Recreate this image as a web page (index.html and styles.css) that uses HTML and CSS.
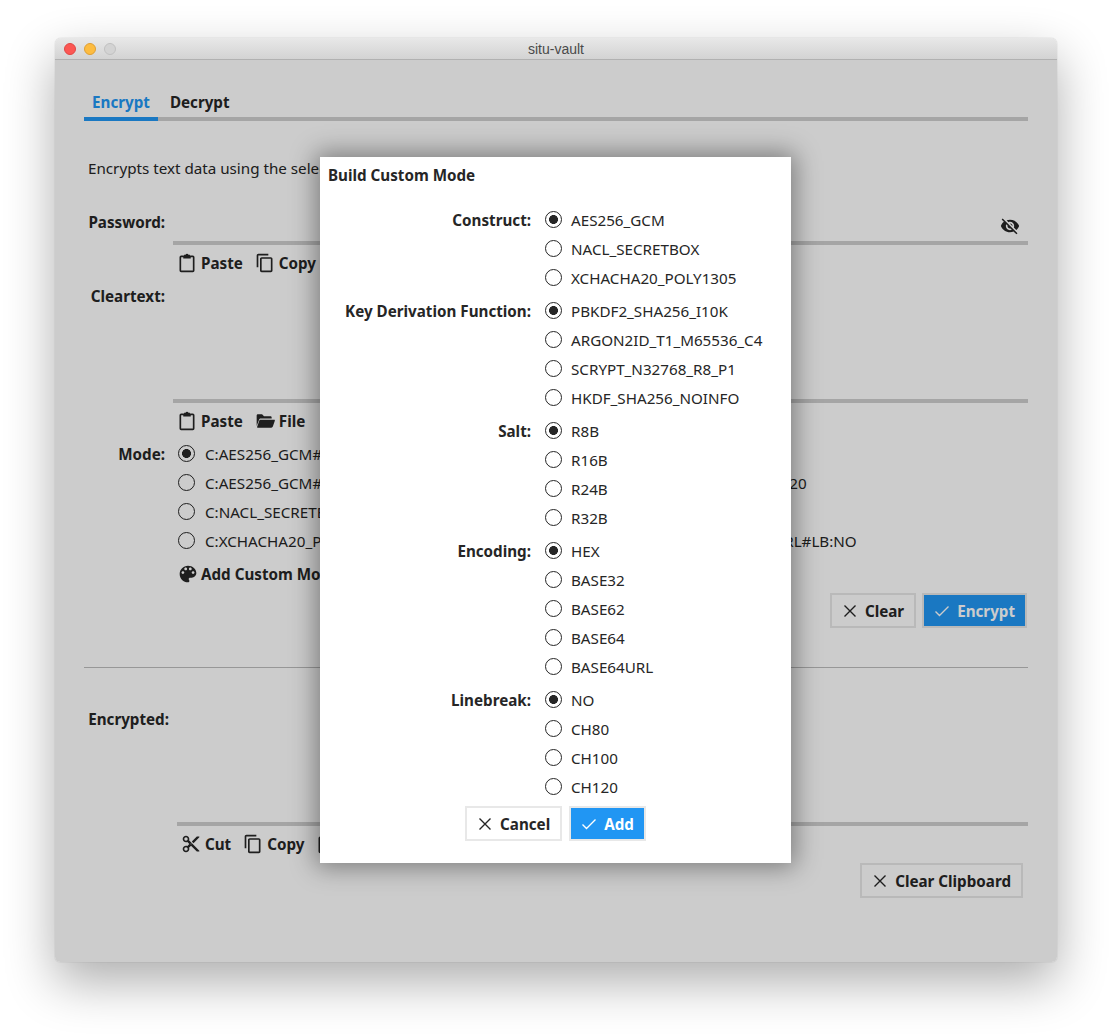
FILE: index.html
```html
<!DOCTYPE html>
<html lang="en">
<head>
    <meta charset="UTF-8">
    <meta name="viewport" content="width=device-width, initial-scale=1.0">
    <title>situ-vault</title>
    <link rel="stylesheet" href="styles.css">
</head>
<body>
    <svg class="icon-defs" aria-hidden="true">
        <symbol id="i-paste" viewBox="0 0 24 24"><path fill-rule="evenodd" d="M5 3h3.500V2h1.700a2 2 0 0 1 3.600 0h1.700v1H19a2 2 0 0 1 2 2v16a2 2 0 0 1-2 2H5a2 2 0 0 1-2-2V5a2 2 0 0 1 2-2zm0 2v16h14V5h-2.500v1.500h-9V5z"/></symbol>
        <symbol id="i-copy" viewBox="0 0 24 24"><path d="M16 1H4c-1.100 0-2 .9-2 2v14h2V3h12V1zm3 4H8c-1.100 0-2 .9-2 2v14c0 1.100.9 2 2 2h11c1.100 0 2-.9 2-2V7c0-1.100-.9-2-2-2zm0 16H8V7h11v14z"/></symbol>
        <symbol id="i-cut" viewBox="0 0 24 24"><path d="M9.640 7.640c.23-.5.36-1.050.36-1.640 0-2.210-1.790-4-4-4S2 3.790 2 6s1.790 4 4 4c.59 0 1.140-.13 1.640-.36L10 12l-2.360 2.360C7.140 14.130 6.590 14 6 14c-2.210 0-4 1.790-4 4s1.790 4 4 4 4-1.790 4-4c0-.59-.13-1.140-.36-1.640L12 14l7 7h3v-1L9.640 7.640zM6 8c-1.100 0-2-.89-2-2s.9-2 2-2 2 .89 2 2-.9 2-2 2zm0 12c-1.100 0-2-.89-2-2s.9-2 2-2 2 .89 2 2-.9 2-2 2zm6-7.500c-.28 0-.5-.22-.5-.5s.22-.5.5-.5.5.22.5.5-.22.5-.5.5zM19 3l-6 6 2 2 7-7V3z"/></symbol>
        <symbol id="i-folder" viewBox="0 0 24 24"><path d="M2 5.500C2 4.700 2.700 4 3.500 4h5l2.300 2.300h7.700c.8 0 1.500.7 1.500 1.500v1.200H7c-1 0-1.800.6-2.100 1.500L2 18z"/><path d="M6.800 10.500H23c.7 0 1 .6.800 1.200l-2.400 7c-.3.800-1 1.300-1.800 1.300H3.400c-.7 0-1-.6-.8-1.200l2.500-7.100c.2-.7.900-1.200 1.700-1.200z"/></symbol>
        <symbol id="i-palette" viewBox="0 0 24 24"><path d="M12 2C6.480 2 2 6.480 2 12s4.480 10 10 10c.92 0 1.670-.75 1.670-1.670 0-.43-.17-.82-.43-1.120-.26-.29-.42-.68-.42-1.100 0-.92.75-1.670 1.670-1.670h1.960c3.060 0 5.550-2.490 5.550-5.550C22 5.980 17.520 2 12 2zM5.890 12c-.92 0-1.670-.75-1.670-1.670s.75-1.670 1.670-1.670 1.670.75 1.670 1.670S6.810 12 5.890 12zm3.330-4.440c-.92 0-1.670-.75-1.670-1.670s.75-1.670 1.670-1.670 1.670.75 1.670 1.670-.75 1.670-1.670 1.670zm5.560 0c-.92 0-1.670-.75-1.670-1.670s.75-1.670 1.670-1.670 1.670.75 1.670 1.670-.75 1.670-1.670 1.670zM18.110 12c-.92 0-1.670-.75-1.670-1.670s.75-1.670 1.670-1.670 1.670.75 1.670 1.670-.75 1.670-1.670 1.670z"/></symbol>
        <symbol id="i-eye-off" viewBox="0 0 24 24"><path d="M12 7c2.760 0 5 2.240 5 5 0 .65-.13 1.260-.36 1.830l2.920 2.920c1.510-1.260 2.700-2.890 3.430-4.750-1.730-4.390-6-7.500-11-7.500-1.400 0-2.740.25-3.980.7l2.160 2.160C10.740 7.130 11.350 7 12 7zM2 4.270l2.280 2.280.46.46C3.080 8.300 1.780 10.020 1 12c1.730 4.390 6 7.500 11 7.500 1.550 0 3.030-.3 4.380-.84l.42.42L19.730 22 21 20.730 3.270 3 2 4.270zM7.530 9.800l1.550 1.550c-.05.21-.08.43-.08.65 0 1.660 1.340 3 3 3 .22 0 .44-.03.65-.08l1.550 1.550c-.67.33-1.410.53-2.200.53-2.760 0-5-2.240-5-5 0-.79.2-1.530.53-2.200zm4.310-.78l3.150 3.150.02-.16c0-1.660-1.340-3-3-3l-.17.01z"/></symbol>
        <symbol id="i-close" viewBox="0 0 16 16"><path d="M2.500 2.500l11 11M13.500 2.500l-11 11" fill="none" stroke="currentColor" stroke-width="1.400"/></symbol>
        <symbol id="i-check" viewBox="0 0 16 16"><path d="M1.500 8.500l4 4 9-9" fill="none" stroke="currentColor" stroke-width="1.400"/></symbol>
    </svg>

    <div class="window">
        <div class="titlebar">
            <span class="light light-red"></span>
            <span class="light light-yellow"></span>
            <span class="light light-grey"></span>
            <span class="title">situ-vault</span>
        </div>

        <div class="content">
            <div class="tabs">
                <span class="tab tab-active">Encrypt</span>
                <span class="tab">Decrypt</span>
            </div>

            <p class="intro">Encrypts text data using the selected mode and the given password.</p>

            <div class="form">
                <label class="field-label label-password">Password:</label>
                <div class="password-field">
                    <svg class="icon eye"><use href="#i-eye-off"/></svg>
                </div>

                <label class="field-label label-clear">Cleartext:</label>
                <div class="text-field">
                    <div class="toolbar">
                        <span class="tool"><svg class="icon"><use href="#i-paste"/></svg>Paste</span>
                        <span class="tool"><svg class="icon"><use href="#i-copy"/></svg>Copy</span>
                    </div>
                    <div class="text-box box-clear"></div>
                    <div class="toolbar">
                        <span class="tool"><svg class="icon"><use href="#i-paste"/></svg>Paste</span>
                        <span class="tool"><svg class="icon icon-file"><use href="#i-folder"/></svg>File</span>
                    </div>
                </div>

                <label class="field-label label-mode">Mode:</label>
                <div class="mode-list">
                    <label class="option"><input type="radio" name="mode" checked>C:AES256_GCM#KDF:PBKDF2_SHA256_I10K#SALT:R8B#ENC:HEX#LB:NO</label>
                    <label class="option"><input type="radio" name="mode">C:AES256_GCM#KDF:ARGON2ID_T1_M65536_C4#SALT:R32B#ENC:BASE64#LB:CH120</label>
                    <label class="option"><input type="radio" name="mode">C:NACL_SECRETBOX#KDF:PBKDF2_SHA256_I10K#SALT:R8B#ENC:BASE32#LB:NO</label>
                    <label class="option"><input type="radio" name="mode">C:XCHACHA20_POLY1305#KDF:SCRYPT_N32768_R8_P1#SALT:R32B#ENC:BASE64URL#LB:NO</label>
                    <span class="tool tool-custom"><svg class="icon"><use href="#i-palette"/></svg>Add Custom Mode</span>
                </div>
            </div>

            <div class="actions">
                <button class="btn"><svg class="btn-icon"><use href="#i-close"/></svg>Clear</button>
                <button class="btn btn-primary"><svg class="btn-icon"><use href="#i-check"/></svg>Encrypt</button>
            </div>

            <hr class="divider">

            <div class="result">
                <label class="field-label label-encrypted">Encrypted:</label>
                <div class="text-field">
                    <div class="text-box box-result"></div>
                    <div class="toolbar">
                        <span class="tool"><svg class="icon"><use href="#i-cut"/></svg>Cut</span>
                        <span class="tool"><svg class="icon"><use href="#i-copy"/></svg>Copy</span>
                        <span class="tool"><svg class="icon"><use href="#i-paste"/></svg>Paste</span>
                    </div>
                </div>
            </div>

            <div class="clipboard-row">
                <button class="btn"><svg class="btn-icon"><use href="#i-close"/></svg>Clear Clipboard</button>
            </div>

            <div class="overlay">
                <div class="dialog">
                    <h2 class="dialog-title">Build Custom Mode</h2>

                    <div class="dialog-form">
                        <span class="group-label">Construct:</span>
                        <div class="group">
                            <label class="option"><input type="radio" name="construct" checked>AES256_GCM</label>
                            <label class="option"><input type="radio" name="construct">NACL_SECRETBOX</label>
                            <label class="option"><input type="radio" name="construct">XCHACHA20_POLY1305</label>
                        </div>

                        <span class="group-label">Key Derivation Function:</span>
                        <div class="group">
                            <label class="option"><input type="radio" name="kdf" checked>PBKDF2_SHA256_I10K</label>
                            <label class="option"><input type="radio" name="kdf">ARGON2ID_T1_M65536_C4</label>
                            <label class="option"><input type="radio" name="kdf">SCRYPT_N32768_R8_P1</label>
                            <label class="option"><input type="radio" name="kdf">HKDF_SHA256_NOINFO</label>
                        </div>

                        <span class="group-label">Salt:</span>
                        <div class="group">
                            <label class="option"><input type="radio" name="salt" checked>R8B</label>
                            <label class="option"><input type="radio" name="salt">R16B</label>
                            <label class="option"><input type="radio" name="salt">R24B</label>
                            <label class="option"><input type="radio" name="salt">R32B</label>
                        </div>

                        <span class="group-label">Encoding:</span>
                        <div class="group">
                            <label class="option"><input type="radio" name="encoding" checked>HEX</label>
                            <label class="option"><input type="radio" name="encoding">BASE32</label>
                            <label class="option"><input type="radio" name="encoding">BASE62</label>
                            <label class="option"><input type="radio" name="encoding">BASE64</label>
                            <label class="option"><input type="radio" name="encoding">BASE64URL</label>
                        </div>

                        <span class="group-label">Linebreak:</span>
                        <div class="group">
                            <label class="option"><input type="radio" name="linebreak" checked>NO</label>
                            <label class="option"><input type="radio" name="linebreak">CH80</label>
                            <label class="option"><input type="radio" name="linebreak">CH100</label>
                            <label class="option"><input type="radio" name="linebreak">CH120</label>
                        </div>
                    </div>

                    <div class="dialog-actions">
                        <button class="btn"><svg class="btn-icon"><use href="#i-close"/></svg>Cancel</button>
                        <button class="btn btn-primary"><svg class="btn-icon"><use href="#i-check"/></svg>Add</button>
                    </div>
                </div>
            </div>
        </div>
    </div>
</body>
</html>
```

FILE: styles.css
```css
* {
    box-sizing: border-box;
}
html, body {
    height: 100%;
}
body {
    margin: 0;
    padding: 38px 55px 73px;
    background: #fff;
    font-family: "Noto Sans", sans-serif;
    font-size: 15.2px;
    color: #262626;
}
.icon-defs {
    display: none;
}
.window {
    width: 1002px;
    height: 924px;
    display: flex;
    flex-direction: column;
    border-radius: 6px 6px 5px 5px;
    overflow: hidden;
    box-shadow: 0 20px 50px rgba(0, 0, 0, 0.32), 0 0 1px rgba(0, 0, 0, 0.35);
}
.titlebar {
    flex: none;
    height: 22px;
    display: flex;
    align-items: center;
    position: relative;
    padding-left: 9px;
    gap: 8px;
    background: linear-gradient(to bottom, #e8e8e8, #d3d3d3);
    border-bottom: 1px solid #b1b1b1;
}
.light {
    width: 12px;
    height: 12px;
    border-radius: 50%;
}
.light-red {
    background: #fc5753;
    border: 1px solid #df4744;
}
.light-yellow {
    background: #fdbc40;
    border: 1px solid #de9f34;
}
.light-grey {
    background: #d3d3d3;
    border: 1px solid #c0c0c0;
}
.title {
    position: absolute;
    left: 0;
    right: 0;
    padding-top: 1px;
    text-align: center;
    font-family: "Liberation Sans", sans-serif;
    font-size: 14px;
    color: #4a4a4a;
}
.content {
    flex: 1;
    position: relative;
    background: #fff;
    padding: 32px 29px 0;
}

/* tabs */
.tabs {
    display: flex;
    gap: 4px;
    height: 29px;
    border-bottom: 4px solid #cfcfcf;
}
.tab {
    height: 29px;
    padding: 0 8px;
    line-height: 21px;
    font-weight: 700;
}
.tab-active {
    color: #2196f3;
    border-bottom: 4px solid #2196f3;
}
.intro {
    margin: 37px 0 0 4px;
    line-height: 20px;
}

/* main form */
.form {
    display: grid;
    grid-template-columns: 89px 1fr;
    margin-top: 28px;
}
.field-label {
    font-weight: 700;
    line-height: 20px;
    text-align: right;
    padding-right: 8px;
}
.label-password {
    padding-top: 6px;
}
.label-clear {
    padding-top: 41px;
}
.label-mode {
    padding-top: 5px;
}
.password-field {
    height: 39px;
    border-bottom: 4px solid #cfcfcf;
    display: flex;
    justify-content: flex-end;
    align-items: center;
    padding: 4px 8px 0 0;
}
.eye {
    width: 20px;
    height: 20px;
}
.text-field {
    display: flex;
    flex-direction: column;
}
.toolbar {
    display: flex;
    gap: 12px;
    height: 36px;
    padding: 5px 0 0 4px;
}
.tool {
    display: inline-flex;
    align-items: center;
    gap: 4px;
    height: 26px;
    font-weight: 700;
}
.icon {
    width: 20px;
    height: 20px;
    fill: currentColor;
}
.box-clear {
    height: 124px;
    margin-top: -2px;
    border-bottom: 4px solid #cfcfcf;
}
.mode-list {
    display: flex;
    flex-direction: column;
    margin-left: 5px;
}
.option {
    display: flex;
    align-items: center;
    height: 29px;
    white-space: nowrap;
}
.option input {
    appearance: none;
    margin: 0 9px 0 0;
    width: 17px;
    height: 17px;
    flex: none;
    border: 1.8px solid #262626;
    border-radius: 50%;
}
.option input:checked {
    background: radial-gradient(circle, #262626 0, #262626 4.2px, transparent 4.7px);
}
.mode-list .option input {
    margin-right: 10px;
}
.tool-custom {
    margin-top: 6px;
    gap: 3px;
}

/* buttons */
.actions {
    display: flex;
    justify-content: flex-end;
    gap: 6px;
    margin-top: 6px;
    padding-right: 1px;
}
.btn {
    display: inline-flex;
    align-items: center;
    gap: 7px;
    height: 35px;
    padding: 0 10px;
    background: #fff;
    border: 2px solid #e8e8e8;
    font-family: inherit;
    font-size: 15.2px;
    font-weight: 700;
    color: #262626;
}
.btn-primary {
    background: #2196f3;
    color: #fff;
}
.btn-icon {
    width: 16px;
    height: 16px;
}
.divider {
    margin: 39px 0 0;
    border: 0;
    border-top: 1px solid #bdbdbd;
}
.result {
    display: grid;
    grid-template-columns: 93px 1fr;
    margin-top: 41px;
}
.box-result {
    height: 117px;
    border-bottom: 4px solid #cfcfcf;
}
.clipboard-row {
    display: flex;
    justify-content: flex-end;
    padding-right: 5px;
    margin-top: 1px;
}

/* dialog over everything in the content area */
.overlay {
    position: absolute;
    inset: 0;
    display: flex;
    align-items: center;
    justify-content: center;
    background: rgba(0, 0, 0, 0.2);
}
.dialog {
    width: 471px;
    height: 706px;
    margin-top: -2px;
    margin-left: -1px;
    background: #fff;
    padding: 8px;
    box-shadow: 0 0 24px 4px rgba(0, 0, 0, 0.4);
    display: flex;
    flex-direction: column;
}
.dialog-title {
    margin: 0;
    font-size: 15.2px;
    line-height: 20px;
    font-weight: 700;
}
.dialog-form {
    display: grid;
    grid-template-columns: 203px 1fr;
    column-gap: 14px;
    row-gap: 4px;
    margin-top: 20px;
}
.group-label {
    font-weight: 700;
    line-height: 30px;
    text-align: right;
}
.group {
    display: flex;
    flex-direction: column;
}
.dialog-actions {
    display: flex;
    justify-content: center;
    gap: 7px;
    margin-top: 5px;
}
```
